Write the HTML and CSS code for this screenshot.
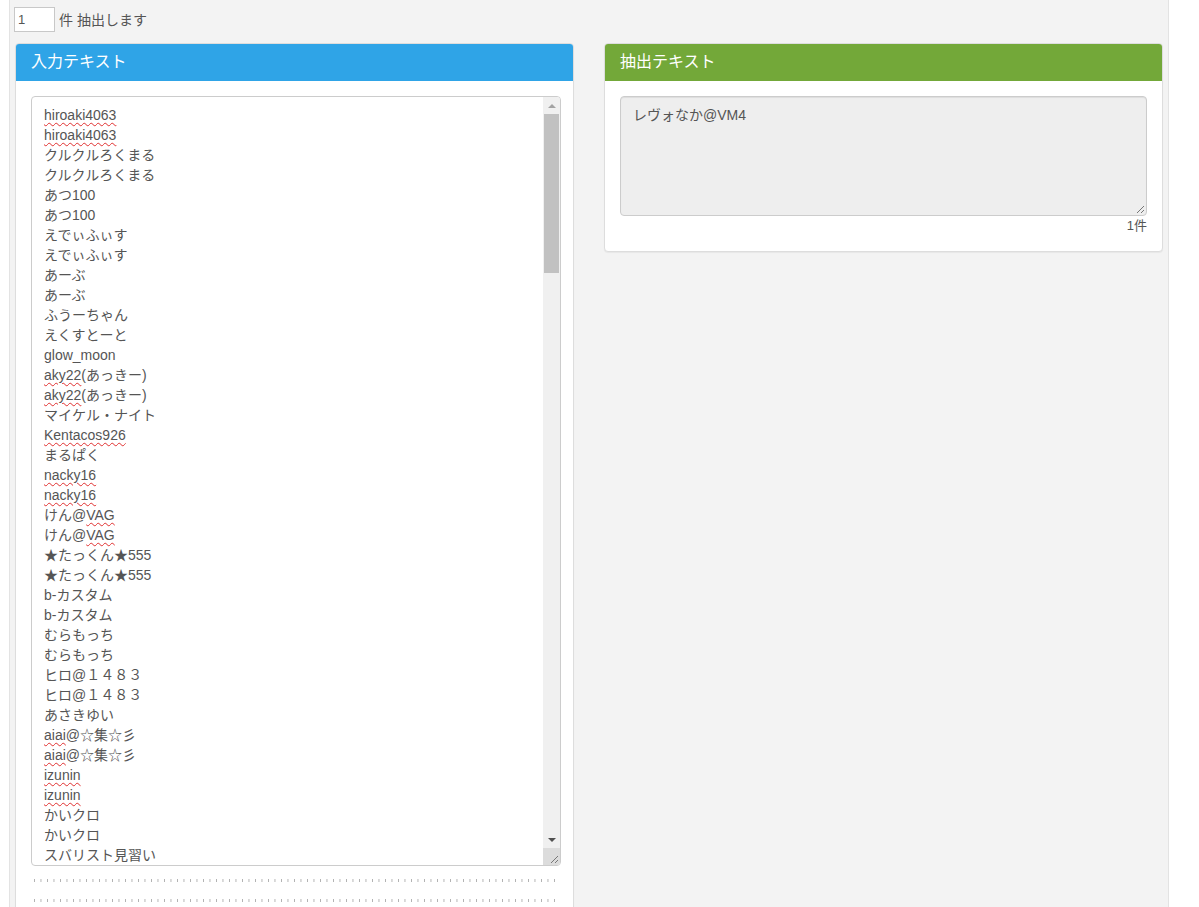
FILE: index.html
```html
<!DOCTYPE html>
<html lang="ja">
<head>
    <meta charset="UTF-8">
    <title>テキスト抽出</title>
    <link rel="stylesheet" href="styles.css">
</head>
<body>
    <div class="wrap">
        <div class="count-row">
            <input type="text" class="count-input" value="1">
            <span>件 抽出します</span>
        </div>

        <div class="columns">
            <div class="panel panel-primary">
                <div class="panel-heading">入力テキスト</div>
                <div class="panel-body">
                    <div class="list-box">
                        <div class="list-lines">
                            <div><span class="typo">hiroaki4063</span></div>
                            <div><span class="typo">hiroaki4063</span></div>
                            <div>クルクルろくまる</div>
                            <div>クルクルろくまる</div>
                            <div>あつ100</div>
                            <div>あつ100</div>
                            <div>えでぃふぃす</div>
                            <div>えでぃふぃす</div>
                            <div>あーぶ</div>
                            <div>あーぶ</div>
                            <div>ふうーちゃん</div>
                            <div>えくすとーと</div>
                            <div>glow_moon</div>
                            <div><span class="typo">aky22</span>(あっきー)</div>
                            <div><span class="typo">aky22</span>(あっきー)</div>
                            <div>マイケル・ナイト</div>
                            <div><span class="typo">Kentacos926</span></div>
                            <div>まるぱく</div>
                            <div><span class="typo">nacky16</span></div>
                            <div><span class="typo">nacky16</span></div>
                            <div>けん@<span class="typo">VAG</span></div>
                            <div>けん@<span class="typo">VAG</span></div>
                            <div>★たっくん★555</div>
                            <div>★たっくん★555</div>
                            <div>b-カスタム</div>
                            <div>b-カスタム</div>
                            <div>むらもっち</div>
                            <div>むらもっち</div>
                            <div>ヒロ@１４８３</div>
                            <div>ヒロ@１４８３</div>
                            <div>あさきゆい</div>
                            <div><span class="typo">aiai</span>@☆集☆彡</div>
                            <div><span class="typo">aiai</span>@☆集☆彡</div>
                            <div><span class="typo">izunin</span></div>
                            <div><span class="typo">izunin</span></div>
                            <div>かいクロ</div>
                            <div>かいクロ</div>
                            <div>スバリスト見習い</div>
                        </div>
                        <div class="scrollbar">
                            <div class="arrow arrow-up"></div>
                            <div class="track">
                                <div class="thumb"></div>
                            </div>
                            <div class="arrow arrow-down"></div>
                            <div class="grip">
                                <svg width="17" height="17" viewBox="0 0 17 17">
                                    <path d="M15 8 L8 15 M15 12 L12 15" stroke="#777" stroke-width="1" fill="none"/>
                                </svg>
                            </div>
                        </div>
                    </div>
                    <div class="ticks"></div>
                    <div class="ticks"></div>
                </div>
            </div>

            <div class="panel panel-success">
                <div class="panel-heading">抽出テキスト</div>
                <div class="panel-body">
                    <div class="result-box">
                        レヴォなか@VM4
                        <svg class="result-grip" width="10" height="10" viewBox="0 0 10 10">
                            <path d="M9 2 L2 9 M9 6 L6 9" stroke="#777" stroke-width="1" fill="none"/>
                        </svg>
                    </div>
                    <div class="result-count">1件</div>
                </div>
            </div>
        </div>
    </div>
</body>
</html>
```

FILE: styles.css
```css
body {
    margin: 0;
    background: #fff;
    font-family: "Liberation Sans", Arial, "Noto Sans CJK JP", sans-serif;
    font-size: 14px;
    line-height: 20px;
    color: #555;
}

.wrap {
    margin-left: 9px;
    width: 1160px;
    min-height: 907px;
    box-sizing: border-box;
    border-left: 1px solid #e3e3e3;
    border-right: 1px solid #e3e3e3;
    background: #f3f3f3;
    padding: 7px 4px 0 5px;
}

.count-row {
    display: flex;
    align-items: center;
    gap: 4px;
    height: 25px;
    margin-bottom: 11px;
}

.count-input {
    width: 41px;
    height: 25px;
    box-sizing: border-box;
    border: 1px solid #c8c8c8;
    padding: 0 3px;
    font-family: inherit;
    font-size: 13px;
    color: #555;
    margin-left: -1px;
}

.count-row span {
    font-size: 14px;
    color: #555;
}

.columns {
    display: grid;
    grid-template-columns: 559px 559px;
    column-gap: 30px;
    align-items: start;
}

.panel {
    background: #fff;
    border: 1px solid #ddd;
    border-radius: 4px;
    box-shadow: 0 1px 1px rgba(0, 0, 0, 0.05);
    overflow: hidden;
}

.panel-heading {
    height: 37px;
    box-sizing: border-box;
    padding: 0 15px;
    font-size: 16px;
    line-height: 36px;
    color: #fff;
}

.panel-primary .panel-heading {
    background: #2fa4e7;
}

.panel-success .panel-heading {
    background: #73a839;
}

.panel-body {
    padding: 15px;
}

.list-box {
    display: flex;
    height: 770px;
    margin-right: -3px;
    border: 1px solid #ccc;
    border-radius: 4px;
    box-sizing: border-box;
    overflow: hidden;
    background: #fff;
}

.list-lines {
    flex: 1;
    padding: 8px 12px;
    overflow: hidden;
    white-space: nowrap;
}

.typo {
    text-decoration: underline wavy #e03030;
    text-decoration-thickness: 1px;
    text-underline-offset: 2px;
}

.scrollbar {
    width: 17px;
    display: flex;
    flex-direction: column;
    background: #f0f0f0;
}

.arrow {
    height: 17px;
    display: flex;
    align-items: center;
    justify-content: center;
}

.arrow-up::before {
    content: "";
    border-left: 4px solid transparent;
    border-right: 4px solid transparent;
    border-bottom: 4px solid #a3a3a3;
}

.arrow-down::before {
    content: "";
    border-left: 4px solid transparent;
    border-right: 4px solid transparent;
    border-top: 4px solid #505050;
}

.track {
    flex: 1;
    padding: 0 1px;
}

.thumb {
    height: 159px;
    background: #c1c1c1;
}

.grip {
    height: 17px;
    background: #dcdcdc;
}

.grip svg {
    display: block;
}

.ticks {
    height: 3px;
    margin: 13px 0 0 3px;
    background-image: linear-gradient(to right, #b0b0b0 1px, transparent 1px);
    background-size: 6.5px 3px;
}

.ticks + .ticks {
    margin-top: 17px;
}

.result-box {
    position: relative;
    height: 120px;
    box-sizing: border-box;
    border: 1px solid #ccc;
    border-radius: 4px;
    background: #eee;
    padding: 8px 12px;
    box-shadow: inset 0 1px 1px rgba(0, 0, 0, 0.075);
}

.result-grip {
    position: absolute;
    right: 1px;
    bottom: 1px;
}

.result-count {
    text-align: right;
    font-size: 13px;
}
```
